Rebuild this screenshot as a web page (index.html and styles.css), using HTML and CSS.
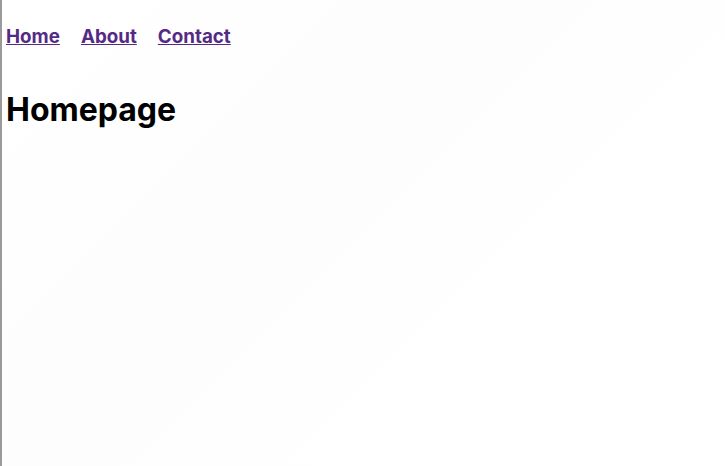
FILE: index.html
```html
<!DOCTYPE html>
<html lang="en">
<head>
    <meta charset="UTF-8">
    <meta name="viewport" content="width=device-width, initial-scale=1.0">
    <title>Homepage</title>
    <link rel="stylesheet" href="styles.css">
</head>
<body>
    <nav class="nav">
        <a href="#">Home</a>
        <a href="#">About</a>
        <a href="#">Contact</a>
    </nav>
    <h1>Homepage</h1>
</body>
</html>
```

FILE: styles.css
```css
html {
    border-left: 2px solid #9a9a9a;
    min-height: 100%;
}
body {
    font-family: Inter, "Noto Sans", sans-serif;
    margin: 0;
    padding: 0 4px;
    min-height: 466px;
    background: linear-gradient(135deg, #fff 0%, #fdfdfd 40%, #fff 75%);
}
.nav {
    display: flex;
    gap: 21px;
    padding-top: 25px;
}
.nav a {
    color: #552a85;
    font-size: 18.8px;
    font-weight: 700;
}
h1 {
    font-size: 32px;
    font-weight: 700;
    margin: 42px 0 0;
}
```
